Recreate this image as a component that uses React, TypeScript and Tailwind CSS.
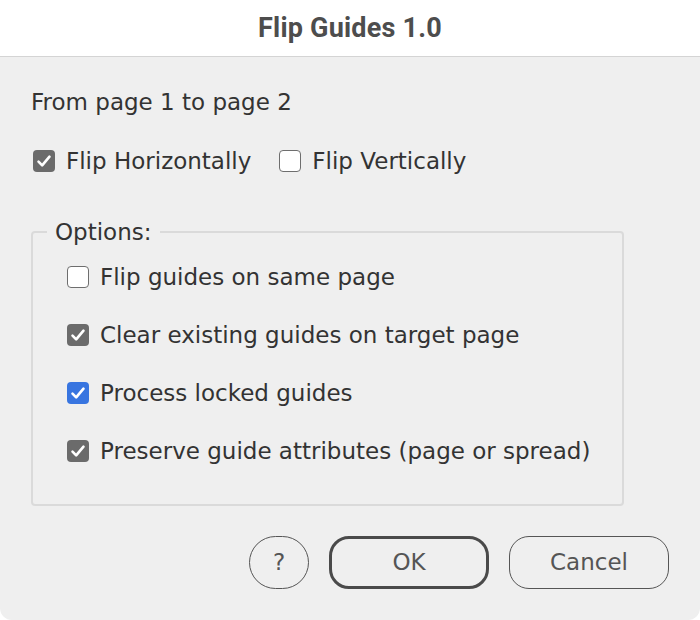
import React from "react";

const Check = ({ color }: { color: string }) => (
  <span className={`flex h-[22px] w-[22px] shrink-0 items-center justify-center rounded-[4px] ${color}`}>
    <svg width="16" height="16" viewBox="0 0 14 14" fill="none">
      <path d="M2.2 7.6 L5.4 10.8 L11.8 3.2" stroke="white" strokeWidth="2.3" strokeLinecap="round" strokeLinejoin="round" />
    </svg>
  </span>
);

const Empty = () => (
  <span className="block h-[22px] w-[22px] shrink-0 rounded-[4px] border-[1.5px] border-[#6e6e6e] bg-white" />
);

const Row = ({ box, label }: { box: React.ReactNode; label: string }) => (
  <div className="flex h-[30px] items-center gap-[11px]">
    {box}
    <span>{label}</span>
  </div>
);

export default function App() {
  return (
    <div className="h-[620px] w-[700px] bg-white" style={{ fontFamily: '"DejaVu Sans", sans-serif' }}>
      <div className="flex h-[620px] flex-col overflow-hidden rounded-b-[12px] bg-[#efefef] text-[23px] text-[#333333]">
        <div className="flex h-[57px] shrink-0 items-center justify-center border-b border-[#d4d4d4] bg-white">
          <span className="text-[27px] font-bold tracking-[0.2px] text-[#4d4d4d]" style={{ fontFamily: 'Roboto, "Liberation Sans", sans-serif' }}>
            Flip Guides 1.0
          </span>
        </div>
        <div className="flex flex-col px-[31px] pt-[30px]">
          <div className="h-[30px] leading-[30px]">From page 1 to page 2</div>
          <div className="mt-[29px] flex items-center pl-[2px]">
            <Row box={<Check color="bg-[#6b6b6b]" />} label="Flip Horizontally" />
            <div className="ml-[28px]">
              <Row box={<Empty />} label="Flip Vertically" />
            </div>
          </div>
          <fieldset className="mt-[42px] h-[288px] w-[593px] rounded-[4px] border-2 border-[#dadada] px-0 pt-[16px]">
            <legend className="ml-[14px] px-[8px] leading-[28px]">Options:</legend>
            <div className="flex flex-col gap-[28px] pl-[34px]">
              <Row box={<Empty />} label="Flip guides on same page" />
              <Row box={<Check color="bg-[#6b6b6b]" />} label="Clear existing guides on target page" />
              <Row box={<Check color="bg-[#3875e0]" />} label="Process locked guides" />
              <Row box={<Check color="bg-[#6b6b6b]" />} label="Preserve guide attributes (page or spread)" />
            </div>
          </fieldset>
          <div className="mt-[30px] flex items-center justify-end gap-[20px] pr-[0px]">
            <button className="flex h-[53px] w-[60px] items-center justify-center rounded-full border-[1.5px] border-[#555555] text-[#555555]">?</button>
            <button className="flex h-[53px] w-[160px] items-center justify-center rounded-[20px] border-[3px] border-[#4a4a4a] text-[#555555]">OK</button>
            <button className="flex h-[53px] w-[160px] items-center justify-center rounded-[20px] border-[1.5px] border-[#555555] text-[#555555]">Cancel</button>
          </div>
        </div>
      </div>
    </div>
  );
}
